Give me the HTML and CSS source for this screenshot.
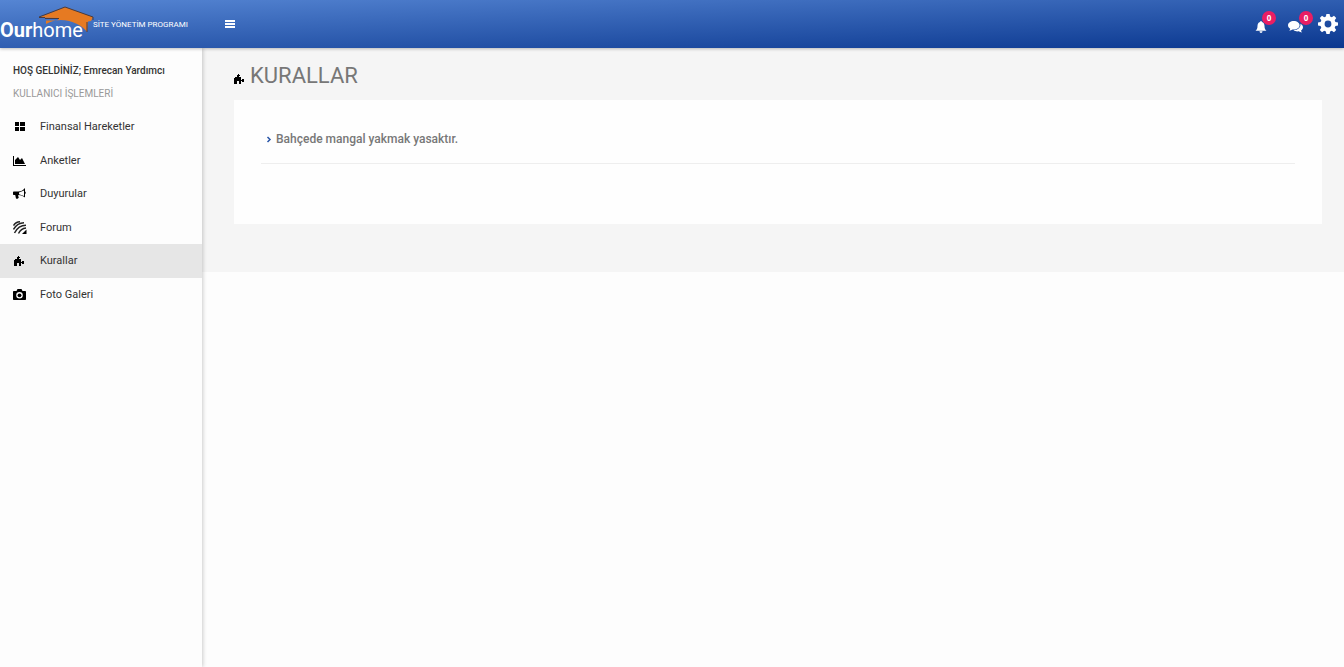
FILE: index.html
```html
<!DOCTYPE html>
<html lang="tr">
<head>
<meta charset="utf-8">
<meta name="viewport" content="width=device-width, initial-scale=1">
<title>Kurallar</title>
<link rel="stylesheet" href="styles.css">
</head>
<body>
<svg class="sprite" aria-hidden="true">
  <symbol id="puzzle" viewBox="0 0 10 10"><path d="M3 1h1V0h1v1h1v1H5v1h2v3h1V5h2v3H8V7H7v3H5V7H3v3H0V4h1V3h2V2H3z"/></symbol>
</svg>
<header class="topbar">
  <a class="brand" href="#">
    <span class="logo"><b>Our</b>home
      <svg class="roof" viewBox="0 0 58 29" aria-hidden="true"><path d="M9 18V14.500H21V12L2 11.500 28 1 56 11 54 15 51 15.500 50 26C44 17 24 9 9 18z" fill="#e67a22"/><path d="M2 11 28 1 56 11V14M2 11.500H8M8 12.500H22M50 16V26" fill="none" stroke="#4a3a3c" stroke-width="1"/></svg>
    </span>
    <span class="tagline">SİTE YÖNETİM PROGRAMI</span>
  </a>
  <button class="icon-btn toggle" aria-label="Menü"><svg width="10" height="8" viewBox="0 0 10 8"><path d="M0 0h10v2H0zM0 3h10v2H0zM0 6h10v2H0z"/></svg></button>
  <nav class="tools" aria-label="Hesap">
    <button class="icon-btn" aria-label="Bildirimler"><svg width="12" height="12" viewBox="0 0 12 12"><path d="M6 0c.6 0 .9.400.9.900C8.800 1.400 9.500 3 9.500 5c0 2.500.8 3.700 2 4.800H.5C1.700 8.700 2.500 7.500 2.500 5c0-2 .7-3.600 2.600-4.100C5.100.4 5.400 0 6 0zM4.500 10.300h3C7.400 11.400 6.800 12 6 12s-1.400-.6-1.500-1.700z"/></svg><span class="badge">0</span></button>
    <button class="icon-btn" aria-label="Mesajlar"><svg width="15" height="12" viewBox="0 0 15 12"><path d="M5.800 0C9 0 11.600 1.900 11.600 4.300S9 8.600 5.800 8.600l-1.300-.1C3.600 9.200 2.500 9.600 1.300 9.700c.5-.5.800-1.100.9-1.900C.8 7 0 5.700 0 4.300 0 1.900 2.600 0 5.800 0z"/><path d="M12.400 2.800C14 3.600 15 4.900 15 6.300c0 1.300-.8 2.500-2 3.300.1.800.5 1.400 1 1.900-1.300-.1-2.400-.5-3.300-1.200-2 .3-3.900-.1-5.200-1 4.500 0 7.600-3 6.900-6.500z"/></svg><span class="badge">0</span></button>
    <button class="icon-btn" aria-label="Ayarlar"><svg width="20" height="20" viewBox="0 0 20 20"><path fill-rule="evenodd" d="M8.400 0h3.200l.5 2.600 1.700.7L16 1.800 18.200 4l-1.500 2.200.7 1.700 2.600.5v3.200l-2.600.5-.7 1.700 1.500 2.200-2.200 2.200-2.200-1.500-1.700.7-.5 2.600H8.400l-.5-2.600-1.700-.7L4 18.200 1.800 16l1.500-2.200-.7-1.700L0 11.600V8.400l2.600-.5.7-1.700L1.800 4 4 1.800l2.200 1.500 1.700-.7zM10 6.600a3.400 3.400 0 1 0 0 6.800 3.400 3.400 0 0 0 0-6.800z"/></svg></button>
  </nav>
</header>
<div class="shell">
  <aside class="sidebar">
    <p class="welcome">HOŞ GELDİNİZ; Emrecan Yardımcı</p>
    <p class="section">KULLANICI İŞLEMLERİ</p>
    <nav class="menu" aria-label="Kullanıcı işlemleri">
      <a href="#"><svg width="14" height="13" viewBox="0 0 14 13"><path d="M2 2h4v4H2zM7 2h5v4H7zM2 7h4v4H2zM7 7h5v4H7z"/></svg>Finansal Hareketler</a>
      <a href="#"><svg width="14" height="13" viewBox="0 0 14 13"><path d="M0 2h1v9h12v1H0zM2 10V6l3-3 2 3 2-2 3 6z"/></svg>Anketler</a>
      <a href="#"><svg width="14" height="13" viewBox="0 0 14 13"><path fill-rule="evenodd" d="M12 1v3.500c1 0 1 2.500 0 2.500v3.500C10 9 8 8.300 5.500 8.100c-.7.700-.3 1.400.3 2.200C5 12 4 12 3 11.500L2.200 8H1C.3 8 0 7.600 0 7V5.500C0 5 .3 4.500 1 4.500h4C8 4.500 10 3.500 12 1zM11 3.500 6 5.500v1.700l5 1.800z"/></svg>Duyurular</a>
      <a href="#"><svg width="14" height="13" viewBox="0 0 14 13"><path d="M.5 4.500C2 2 4 .9 7 .8M.5 8.500C3 4 6 1.700 11 1.700M1.500 12C4 7 7.500 4.200 13 4.200M5.500 12.500C7 9.500 9.500 7.400 13 7" fill="none" stroke="#222" stroke-width="1.500"/><path d="M13.500 8.500V13H9z"/></svg>Forum</a>
      <a class="active" href="#" aria-current="page"><svg class="puzzle" width="10" height="10"><use href="#puzzle"/></svg>Kurallar</a>
      <a href="#"><svg width="14" height="14" viewBox="0 0 14 14"><path fill-rule="evenodd" d="M4.500 2h4l1 2H12c.6 0 1 .4 1 1v7c0 .6-.4 1-1 1H1c-.6 0-1-.4-1-1V5c0-.6.4-1 1-1h2.500zM6.500 5a3.300 3.300 0 1 0 0 6.600 3.300 3.300 0 0 0 0-6.600z"/><circle cx="6.500" cy="8.300" r="1.900"/></svg>Foto Galeri</a>
    </nav>
  </aside>
  <main class="content">
    <h1><svg width="10" height="10"><use href="#puzzle"/></svg>KURALLAR</h1>
    <section class="card">
      <ul class="rules">
        <li><svg width="6" height="7" viewBox="0 0 6 7"><path d="M1.500 1 4 3.500 1.500 6" fill="none" stroke="#2a56a8" stroke-width="1.500"/></svg>Bahçede mangal yakmak yasaktır.</li>
      </ul>
    </section>
  </main>
</div>
</body>
</html>
```
FILE: styles.css
```css
* { box-sizing: border-box; }
body {
  margin: 0;
  min-height: 100vh;
  display: flex;
  flex-direction: column;
  background: #fdfdfd;
  color: #333;
  font-family: Roboto, sans-serif;
  font-size: 11px;
}
h1, p, ul { margin: 0; padding: 0; }
a { color: inherit; text-decoration: none; }
svg { flex: none; }
.sprite { position: absolute; width: 0; height: 0; }

.topbar {
  position: relative;
  z-index: 2;
  display: flex;
  align-items: center;
  height: 48px;
  background: linear-gradient(to bottom right, #5585d3, #0a378f);
  box-shadow: 0 1px 3px rgba(0, 0, 0, .25);
}
.brand {
  display: flex;
  align-items: center;
  width: 225px;
  height: 48px;
  color: #fff;
}
.logo {
  position: relative;
  width: 93px;
  padding-top: 12px;
  font-size: 20px;
  line-height: 24px;
  white-space: nowrap;
}
.roof { position: absolute; left: 37px; top: 0; width: 58px; height: 29px; }
.tagline { font-size: 8px; font-weight: 400; white-space: nowrap; }
.icon-btn {
  position: relative;
  display: flex;
  padding: 0;
  border: 0;
  background: none;
  fill: #fff;
}
.tools {
  display: flex;
  align-items: center;
  gap: 15px;
  margin-left: auto;
  padding-right: 6px;
}
.tools .icon-btn:nth-child(1) { padding-top: 6px; margin-right: 6px; }
.tools .icon-btn:nth-child(2) { padding-top: 6px; }
.badge {
  position: absolute;
  left: 7px;
  top: -4px;
  width: 14px;
  height: 14px;
  border-radius: 50%;
  background: #e91e63;
  color: #fff;
  font: bold 8px/14px "Open Sans", sans-serif;
  text-align: center;
}
.tools .icon-btn:nth-child(2) .badge { left: 11px; }

.shell { display: flex; flex: 1; align-items: stretch; }
.sidebar {
  position: relative;
  z-index: 1;
  flex: none;
  width: 202px;
  padding-top: 16px;
  background: #fdfdfd;
  box-shadow: 1px 0 4px rgba(0, 0, 0, .2);
}
.welcome, .section { padding: 0 13px; white-space: nowrap; }
.welcome { font-size: 10px; line-height: 14px; font-weight: 500; }
.section { margin-top: 8px; font-size: 10px; line-height: 16px; color: #999; }
.menu {
  display: grid;
  grid-auto-rows: 1fr;
  height: 201px;
  margin-top: 8px;
}
.menu a {
  display: flex;
  align-items: center;
  padding-left: 13px;
}
.menu svg { margin-right: 13px; }
.menu .puzzle { margin: 0 16px 0 1px; }
.menu .active { background: #e6e6e6; }

.content {
  flex: 1;
  align-self: flex-start;
  padding: 12px 22px 48px 32px;
  background: #f5f5f5;
}
h1 {
  display: flex;
  align-items: center;
  gap: 6px;
  font-size: 22px;
  line-height: 32px;
  font-weight: 400;
  color: #777;
}
h1 svg { margin-top: 6px; fill: #000; }
.card {
  min-height: 124px;
  margin-top: 8px;
  padding: 24px 27px;
  background: #fefefe;
}
.rules { list-style: none; }
.rules li {
  display: flex;
  align-items: center;
  gap: 4px;
  padding: 0 5px 9px;
  border-bottom: 1px solid #eee;
  font-size: 12px;
  line-height: 30px;
  font-weight: 500;
  color: #777;
}
```
